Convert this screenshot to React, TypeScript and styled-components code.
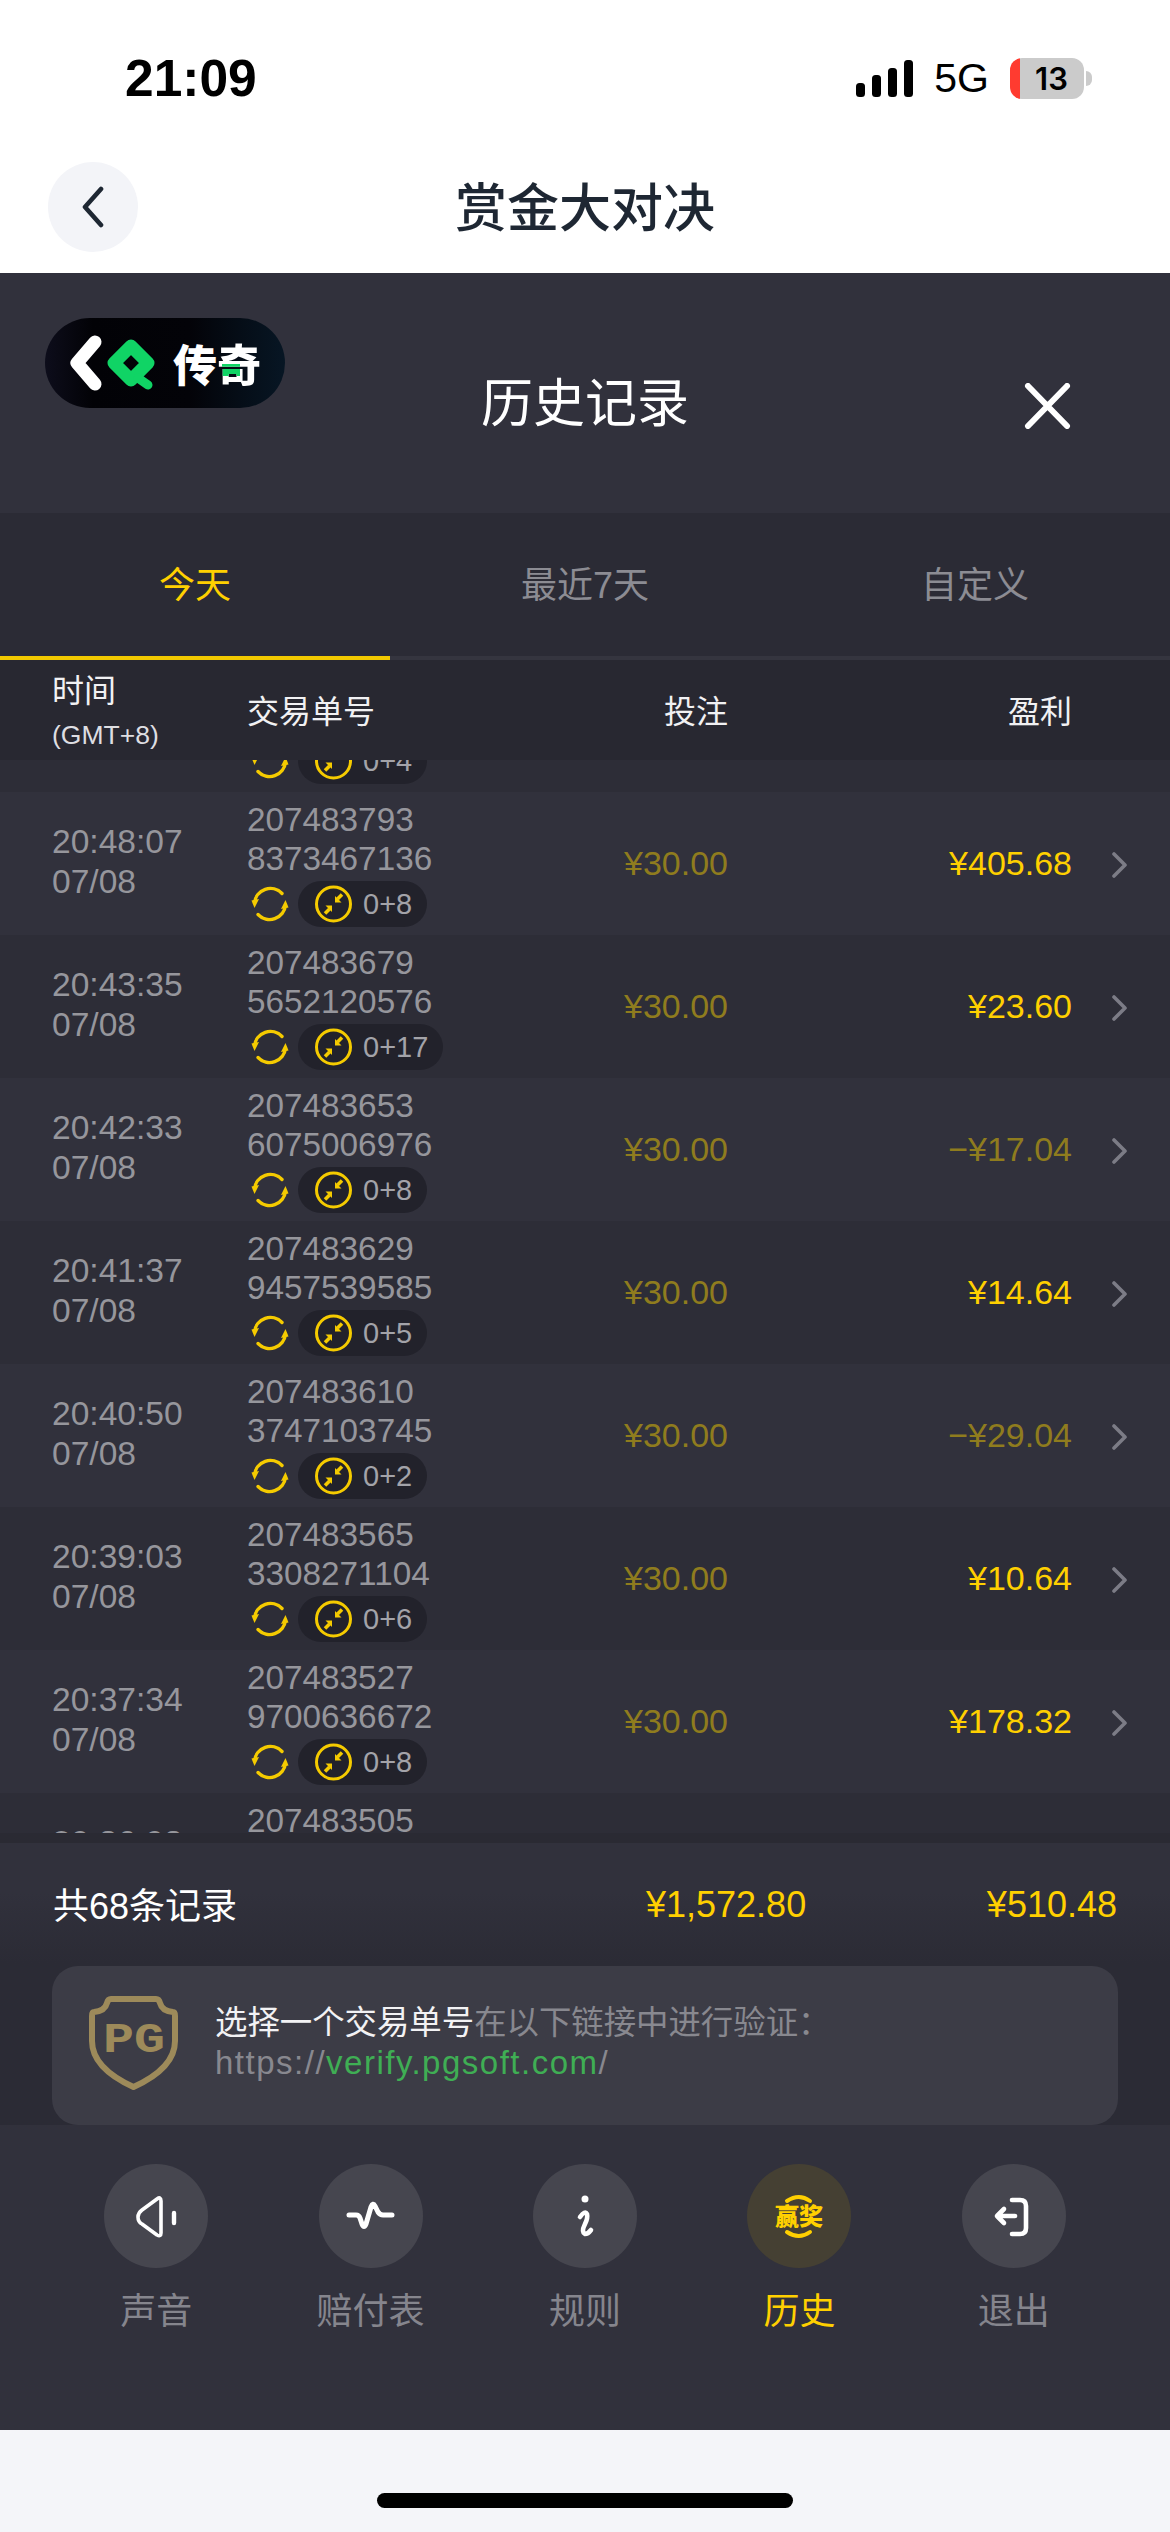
import React from "react";
import styled, { createGlobalStyle } from "styled-components";

const Global = createGlobalStyle`
  html, body { margin: 0; padding: 0; background: #fff; }
  body { width: 1170px; height: 2532px; overflow: hidden; font-family: "Liberation Sans", "Noto Sans CJK SC", sans-serif; }
  * { box-sizing: border-box; }
`;

const Page = styled.div`width: 1170px; height: 2532px; display: flex; flex-direction: column; background: #fff;`;
const StatusBar = styled.div`height: 135px; padding: 21px 78px 0 125px; display: flex; align-items: center; justify-content: space-between;`;
const Clock = styled.div`font-size: 51.5px; font-weight: 700; color: #000; letter-spacing: 0;`;
const StatusRight = styled.div`display: flex; align-items: center;`;
const Signal = styled.div`display: flex; align-items: flex-end; gap: 6.5px; height: 37px; margin-right: 21px;`;
const SignalBar = styled.span<{ $h: number }>`width: 9.5px; height: ${(p) => p.$h}px; border-radius: 3.5px; background: #000;`;
const NetLabel = styled.div`font-size: 41px; color: #000; margin-right: 21px; line-height: 41px;`;
const Battery = styled.div`
  position: relative; width: 74px; height: 41px; border-radius: 12px;
  background: linear-gradient(to right, #ff3b30 10px, #cbcbcb 10px);
  display: flex; align-items: center; justify-content: center; padding-left: 9px;
  font-family: Inter, sans-serif; font-size: 31px; font-weight: 600; color: #000; margin-right: 8px;
  &::after { content: ""; position: absolute; right: -8px; top: 13px; width: 6px; height: 15px; border-radius: 0 8px 8px 0; background: #cbcbcb; }
`;

const NavBar = styled.div`height: 138px; padding: 27px 48px 21px; display: grid; grid-template-columns: 1fr auto 1fr; align-items: center;`;
const BackButton = styled.div`width: 90px; height: 90px; border-radius: 50%; background: #f3f4f8; display: flex; align-items: center; justify-content: center;`;
const NavTitle = styled.div`font-family: "Noto Sans CJK SC", sans-serif; font-size: 52px; font-weight: 500; color: #1e2733; line-height: 60px; margin-top: -5px;`;

const Panel = styled.div`flex: none; height: 2157px; background: #31313c; display: flex; flex-direction: column;`;
const PanelHeader = styled.div`height: 240px; padding: 45px 45px 0; display: grid; grid-template-columns: 1fr auto 1fr; align-items: start;`;
const Logo = styled.div`
  width: 240px; height: 90px; border-radius: 45px; display: flex; align-items: center; padding-left: 22px; gap: 12px;
  background: linear-gradient(to right, #0d0d1b 0%, #020206 20%, #030308 60%, #071624 100%);
`;
const LogoText = styled.div`font-family: "Noto Sans CJK SC", sans-serif; font-size: 44px; font-weight: 900; color: #fff; line-height: 50px; letter-spacing: 0;`;
const LogoAccent = styled.span`
  background-image: linear-gradient(#10d465, #10d465), linear-gradient(#fff, #fff);
  background-size: 18px 12px, 100% 100%; background-position: 5px 33px, 0 0; background-repeat: no-repeat;
  -webkit-background-clip: text; background-clip: text; color: transparent;
`;
const PanelTitle = styled.div`font-family: "Noto Sans CJK SC", sans-serif; font-size: 52px; color: #fff; line-height: 60px; margin-top: 52px;`;
const CloseIcon = styled.svg`justify-self: end; width: 47px; height: 46px; margin: 65px 54px 0 0;`;

const Tabs = styled.div`display: grid; grid-template-columns: repeat(3, 390px); height: 147px; padding-bottom: 0; background: #2b2b35; border-bottom: 4px solid #35353f;`;
const Tab = styled.div<{ $active?: boolean }>`
  position: relative; display: flex; align-items: center; justify-content: center; font-size: 36px; padding-bottom: 5px;
  color: ${(p) => (p.$active ? "#ffd000" : "#8c8c93")};
  ${(p) => p.$active && `&::after { content: ""; position: absolute; left: 0; right: 0; bottom: -4px; height: 4px; background: #f2c900; }`}
`;

const columns = `195px 220px 261px 344px 55px`;
const TableHead = styled.div`display: grid; grid-template-columns: ${columns}; height: 100px; padding-left: 52px; background: #282831; align-items: center; color: #f1f1f3; font-size: 32px;`;
const HeadTime = styled.div`display: flex; flex-direction: column; line-height: 44px; margin-top: 6px;`;
const HeadSub = styled.span`font-size: 26.5px; line-height: 44px; color: #dedee2;`;
const HeadLabel = styled.div`margin-top: -2px;`;
const HeadRight = styled(HeadLabel)`text-align: right;`;

const List = styled.div`height: 1073px; overflow: hidden; flex: none;`;
const Row = styled.div<{ $even: boolean; $first?: boolean }>`
  display: grid; grid-template-columns: ${columns}; height: 143px; padding: 9px 0 8px 52px; align-items: center;
  background: ${(p) => (p.$even ? "#2d2d37" : "#31313c")};
  ${(p) => p.$first && "margin-top: -111px;"}
`;
const TimeCell = styled.div`font-size: 33.6px; line-height: 40px; color: #96969c; margin-top: -4px;`;
const TxCell = styled.div`font-size: 33.3px; line-height: 38.5px; color: #96969c; display: flex; flex-direction: column;`;
const BadgeRow = styled.div`display: flex; align-items: center; margin-top: 3px; height: 46px; margin-left: 4px;`;
const Badge = styled.div`display: flex; align-items: center; height: 46px; border-radius: 23px; background: #22222b; padding: 0 15px 0 17px; margin-left: 9px; font-size: 29px; color: #a3a3a9; gap: 11px;`;
const BetCell = styled.div`font-size: 34px; color: #8f7c1e; text-align: right; margin-top: -1px;`;
const ProfitCell = styled.div<{ $loss: boolean }>`font-size: 34px; text-align: right; margin-top: -1px; color: ${(p) => (p.$loss ? "#8f7c1e" : "#ffd000")};`;
const ChevronWrap = styled.div`display: flex; justify-content: flex-end; margin-top: 2px;`;

const Summary = styled.div`
  height: 292px; padding: 0 53px; display: flex; flex-direction: column;
  background: linear-gradient(to bottom, #2a2a33 0, #2a2a33 10px, #31313c 10px, #31313c 60px, #2b2b35 130px, #2b2b35 100%);
`;
const Totals = styled.div`height: 133px; padding-top: 10px; display: grid; grid-template-columns: 1fr 158px 313px; align-items: center; font-size: 36px;`;
const TotalLabel = styled.div`color: #fff; margin-top: -4px;`;
const TotalValue = styled.div`color: #ffd000; text-align: right; white-space: nowrap; margin-top: 1px;`;
const VerifyCard = styled.div`margin: 0 0 0 -1px; height: 159px; width: 1066px; border-radius: 26px; background: #3c3c46; display: flex; align-items: center; padding: 0 0 6px 37px; gap: 37px;`;
const VerifyText = styled.div`font-size: 32.4px; line-height: 40px; color: #88888f; display: flex; flex-direction: column;`;
const VerifyStrong = styled.span`color: #f2f2f4;`;
const VerifyUrl = styled.div`font-size: 33px; letter-spacing: 1.5px;`;
const VerifyLink = styled.span`color: #3fae54;`;

const BottomNav = styled.div`flex: 1; padding: 39px 49px 0; display: grid; grid-template-columns: repeat(5, 1fr); align-items: start;`;
const NavItem = styled.div`display: flex; flex-direction: column; align-items: center;`;
const NavCircle = styled.div<{ $active?: boolean }>`width: 104px; height: 104px; border-radius: 50%; background: ${(p) => (p.$active ? "#454033" : "#46464f")};`;
const NavLabel = styled.div<{ $active?: boolean }>`font-family: "Noto Sans CJK SC", sans-serif; font-size: 36px; line-height: 44px; margin-top: 18px; color: ${(p) => (p.$active ? "#ffd000" : "#85858d")};`;

const HomeArea = styled.div`flex: 1; background: #f4f5f9; display: flex; justify-content: center; padding-top: 63px;`;
const HomeBar = styled.div`width: 416px; height: 15px; border-radius: 8px; background: #000;`;

const Refresh = () => (
  <svg width="38" height="38" viewBox="0 0 38 38" fill="none">
    <path d="M3.5 18A16 16 0 0 1 31 8.5" stroke="#f5cb00" strokeWidth="3.4" strokeLinecap="round" />
    <path d="M34.5 20A16 16 0 0 1 7 29.5" stroke="#f5cb00" strokeWidth="3.4" strokeLinecap="round" />
    <path d="M0.5 15.5L8 14L3.5 23Z" fill="#f5cb00" />
    <path d="M37.5 22.5L30 24L34.5 15Z" fill="#f5cb00" />
  </svg>
);
const Compress = () => (
  <svg width="37" height="38" viewBox="0 0 37 38" fill="none">
    <circle cx="18.5" cy="19" r="17" stroke="#f5cb00" strokeWidth="3" />
    <path d="M20 11L26.5 17.5L20 17.5Z" fill="#f5cb00" />
    <path d="M27 9.5L22.5 14" stroke="#f5cb00" strokeWidth="3.5" />
    <path d="M10.5 20.5L17 20.5L17 27Z" fill="#f5cb00" />
    <path d="M10 28.5L14.5 24" stroke="#f5cb00" strokeWidth="3.5" />
  </svg>
);
const Chevron = () => (
  <svg width="15" height="26" viewBox="0 0 15 26" fill="none">
    <path d="M2 2L13 13L2 24" stroke="#7c7c86" strokeWidth="3.6" strokeLinecap="round" strokeLinejoin="round" />
  </svg>
);
const Shield = () => (
  <svg width="89" height="94" viewBox="0 0 89 94" fill="none">
    <path d="M22 3H67Q70 3 71 7Q73 15 84 16Q86 16 86 20V45Q86 72 44.5 91Q3 72 3 45V20Q3 16 5 16Q16 15 18 7Q19 3 22 3Z" stroke="#9d8a5a" strokeWidth="6" />
    <text x="14" y="56" fontFamily="'Liberation Mono', monospace" fontWeight="700" fontSize="42" fill="#9d8a5a" textLength="62" lengthAdjust="spacingAndGlyphs">PG</text>
  </svg>
);
const LogoMark = () => (
  <svg width="94" height="62" viewBox="0 0 94 62" fill="none">
    <path d="M28 10L10 31L28 52" stroke="#fff" strokeWidth="13" strokeLinejoin="round" strokeLinecap="round" />
    <path d="M64 14L81 31L64 48L47 31Z" stroke="#10d465" strokeWidth="13" strokeLinejoin="round" />
    <path d="M71 46L81 53" stroke="#10d465" strokeWidth="9" strokeLinecap="round" />
  </svg>
);

const iconStroke = { stroke: "#fff", fill: "none", strokeLinecap: "round" as const, strokeLinejoin: "round" as const };
const navItems = [
  { label: "声音", icon: <g {...iconStroke} strokeWidth="3.6"><path d="M57 37Q57 32 53 35L38 46Q34 49 34 53Q34 58 38 60L53 71Q57 73 57 69Z" /><path d="M70 49V59" strokeWidth="4.4" /></g> },
  { label: "赔付表", icon: <path {...iconStroke} strokeWidth="5" d="M30 51H37Q40 51 41 54L43 60Q45 65 47 60L52 43Q54 38 56 42L59 48Q61 51 64 51H73" /> },
  { label: "规则", icon: <g {...iconStroke}><circle cx="52" cy="35" r="3.5" fill="#fff" stroke="none" /><path strokeWidth="4.6" d="M47 53Q52 46 54 50Q55 54 52 60Q48 68 52 70Q55 70 58 66" /></g> },
  { label: "历史", active: true, icon: (
    <g>
      <path d="M40 37Q52 29 63 37" stroke="#ffd000" strokeWidth="4" fill="none" strokeLinecap="round" />
      <path d="M40 68Q52 76 63 68" stroke="#ffd000" strokeWidth="4" fill="none" strokeLinecap="round" />
      <text x="52" y="61" textAnchor="middle" fontFamily="'Noto Sans CJK SC', sans-serif" fontWeight="900" fontSize="24" fill="#ffd000">赢奖</text>
    </g>
  ) },
  { label: "退出", icon: <g {...iconStroke} strokeWidth="4.6"><path d="M50 36H58Q64 36 64 42V64Q64 70 58 70H50" /><path d="M36 52H53M42 45L35 52L42 59" /></g> },
];

const rows = [
  { t: "20:51:02", a: "207483812", b: "1940275583", c: "0+4", bet: "¥30.00", p: "¥12.40", loss: false },
  { t: "20:48:07", a: "207483793", b: "8373467136", c: "0+8", bet: "¥30.00", p: "¥405.68", loss: false },
  { t: "20:43:35", a: "207483679", b: "5652120576", c: "0+17", bet: "¥30.00", p: "¥23.60", loss: false },
  { t: "20:42:33", a: "207483653", b: "6075006976", c: "0+8", bet: "¥30.00", p: "−¥17.04", loss: true },
  { t: "20:41:37", a: "207483629", b: "9457539585", c: "0+5", bet: "¥30.00", p: "¥14.64", loss: false },
  { t: "20:40:50", a: "207483610", b: "3747103745", c: "0+2", bet: "¥30.00", p: "−¥29.04", loss: true },
  { t: "20:39:03", a: "207483565", b: "3308271104", c: "0+6", bet: "¥30.00", p: "¥10.64", loss: false },
  { t: "20:37:34", a: "207483527", b: "9700636672", c: "0+8", bet: "¥30.00", p: "¥178.32", loss: false },
  { t: "20:36:03", a: "207483505", b: "1284470912", c: "0+3", bet: "¥30.00", p: "¥8.20", loss: false },
];

export default function App() {
  return (
    <Page>
      <Global />
      <StatusBar>
        <Clock>21:09</Clock>
        <StatusRight>
          <Signal>
            {[14, 22, 29, 37].map((h) => <SignalBar key={h} $h={h} />)}
          </Signal>
          <NetLabel>5G</NetLabel>
          <Battery>13</Battery>
        </StatusRight>
      </StatusBar>
      <NavBar>
        <BackButton>
          <svg width="24" height="42" viewBox="0 0 24 42" fill="none">
            <path d="M20 3L4 21L20 39" stroke="#1e2733" strokeWidth="4.6" strokeLinecap="round" strokeLinejoin="round" />
          </svg>
        </BackButton>
        <NavTitle>赏金大对决</NavTitle>
      </NavBar>
      <Panel>
        <PanelHeader>
          <Logo>
            <LogoMark />
            <LogoText>传<LogoAccent>奇</LogoAccent></LogoText>
          </Logo>
          <PanelTitle>历史记录</PanelTitle>
          <CloseIcon viewBox="0 0 47 46" fill="none">
            <path d="M4 3L43 43M43 3L4 43" stroke="#fff" strokeWidth="6" strokeLinecap="round" />
          </CloseIcon>
        </PanelHeader>
        <Tabs>
          <Tab $active>今天</Tab>
          <Tab>最近7天</Tab>
          <Tab>自定义</Tab>
        </Tabs>
        <TableHead>
          <HeadTime>时间<HeadSub>(GMT+8)</HeadSub></HeadTime>
          <HeadLabel>交易单号</HeadLabel>
          <HeadRight>投注</HeadRight>
          <HeadRight>盈利</HeadRight>
        </TableHead>
        <List>
          {rows.map((r, i) => (
            <Row key={r.a} $even={i % 2 === 0} $first={i === 0}>
              <TimeCell>{r.t}<br />07/08</TimeCell>
              <TxCell>
                <span>{r.a}</span>
                <span>{r.b}</span>
                <BadgeRow>
                  <Refresh />
                  <Badge><Compress />{r.c}</Badge>
                </BadgeRow>
              </TxCell>
              <BetCell>{r.bet}</BetCell>
              <ProfitCell $loss={r.loss}>{r.p}</ProfitCell>
              <ChevronWrap><Chevron /></ChevronWrap>
            </Row>
          ))}
        </List>
        <Summary>
          <Totals>
            <TotalLabel>共68条记录</TotalLabel>
            <TotalValue>¥1,572.80</TotalValue>
            <TotalValue>¥510.48</TotalValue>
          </Totals>
          <VerifyCard>
            <Shield />
            <VerifyText>
              <div><VerifyStrong>选择一个交易单号</VerifyStrong>在以下链接中进行验证：</div>
              <VerifyUrl>https://<VerifyLink>verify.pgsoft.com</VerifyLink>/</VerifyUrl>
            </VerifyText>
          </VerifyCard>
        </Summary>
        <BottomNav>
          {navItems.map((n) => (
            <NavItem key={n.label}>
              <NavCircle $active={n.active}>
                <svg width="104" height="104" viewBox="0 0 104 104">{n.icon}</svg>
              </NavCircle>
              <NavLabel $active={n.active}>{n.label}</NavLabel>
            </NavItem>
          ))}
        </BottomNav>
      </Panel>
      <HomeArea><HomeBar /></HomeArea>
    </Page>
  );
}
